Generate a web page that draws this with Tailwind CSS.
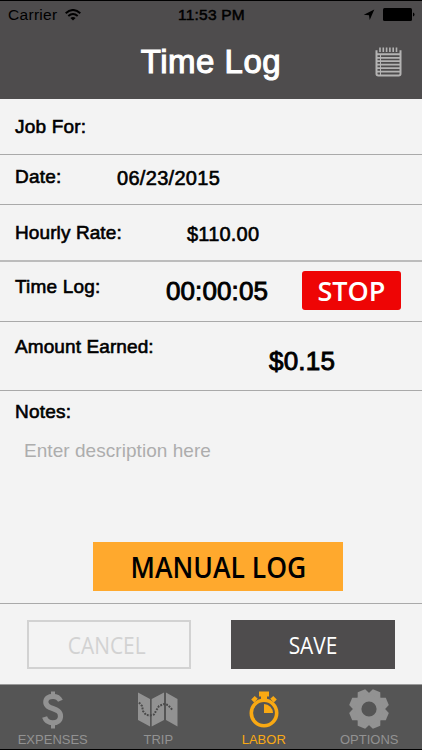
<!DOCTYPE html>
<html lang="en">
<head>
    <meta charset="UTF-8">
    <meta name="viewport" content="width=device-width, initial-scale=1.0">
    <title>Time Log</title>
    <script src="https://cdn.jsdelivr.net/npm/@tailwindcss/browser@4"></script>
</head>
<body class="w-[422px] h-[750px] overflow-hidden flex flex-col bg-[#f3f3f3] text-black font-['Liberation_Sans',sans-serif]">
    <header class="h-[99px] shrink-0 bg-[#4e4c4d] border-t border-black">
        <div class="h-[27px] grid grid-cols-3 items-center pl-2 pr-[7px] text-[15.5px]">
            <div class="flex items-center gap-2 tracking-[0.3px]">
                <span>Carrier</span>
                <svg class="w-4 h-3" viewBox="0 0 16 12" fill="none" stroke="black" stroke-width="2">
                    <path d="M.7 4.2Q8-2.2 15.3 4.2M3.3 7Q8 3 12.7 7"/>
                    <path d="M5.4 9Q8 7 10.6 9L8 11.6Z" fill="black" stroke="none"/>
                </svg>
            </div>
            <span class="text-center tracking-[0.2px] [-webkit-text-stroke:0.5px_black] whitespace-nowrap">11:53 PM</span>
            <div class="flex items-center justify-end gap-2">
                <svg class="w-3 h-3" viewBox="0 0 12 12"><path d="M11.3.5L6.7 11L6 6.3L.8 5.8Z"/></svg>
                <svg class="w-8 h-[13px]" viewBox="0 0 32 13"><rect x="0" y="0" width="29" height="13" rx="1.5"/><path d="M30 4.5Q31.5 5 31.5 6.5Q31.5 8 30 8.5Z"/></svg>
            </div>
        </div>
        <div class="h-[71px] grid grid-cols-[1fr_142px_1fr] items-center">
            <span></span>
            <h1 class="text-[33px] leading-[38px] -mt-[3px] text-white text-center tracking-[0.5px] whitespace-nowrap [-webkit-text-stroke:1.1px_white]">Time Log</h1>
            <svg class="w-[27px] h-[30px] justify-self-end mr-5 -mt-1" viewBox="0 0 27 30" fill="none" stroke="#b4b3b3">
                <path d="M5 .5V5M8.3 .5V5M11.6 .5V5M14.9 .5V5M18.2 .5V5M21.5 .5V5" stroke-width="1.6"/>
                <path d="M1.5 3.2V26.8Q1.5 28.5 3.2 28.5H23.8Q25.5 28.5 25.5 26.8V3.2M1 7.2H26" stroke-width="2"/>
                <path d="M2 10.8H25M2 14.2H25M2 17.7H25M2 21.2H25M2 24.7H25" stroke-width="1.7"/>
                <path d="M5.5 8V28" stroke-width="1"/>
            </svg>
        </div>
    </header>

    <main class="flex flex-col text-[19px] leading-[22px] tracking-[0.2px] [-webkit-text-stroke:0.6px_black]">
        <div class="h-[56px] border-b border-[#a9a9a9] pl-[15px] pt-[17px]">Job For:</div>
        <div class="h-[50px] border-b border-[#a9a9a9] pl-[15px] pt-[11px] flex">
            <span class="w-[102px]">Date:</span>
            <span class="text-[20px] pt-px tracking-[0.3px]">06/23/2015</span>
        </div>
        <div class="h-[57px] border-b-2 border-[#bcbcbc] pl-[15px] pt-[17px] flex">
            <span class="w-[172px] tracking-[0.1px]">Hourly Rate:</span>
            <span class="text-[20px] pt-px">$110.00</span>
        </div>
        <div class="h-[60px] border-b border-[#a9a9a9] pl-[15px] pt-[9px] flex items-start">
            <span class="w-[151px] pt-[5px]">Time Log:</span>
            <span class="w-[136px] text-[26px] leading-[30px] pt-[5px] tracking-[0.1px] [-webkit-text-stroke:0.9px_black]">00:00:05</span>
            <button class="w-[99px] h-[39px] rounded-[3px] bg-[#ee0505] text-white text-[27px] leading-[37px] tracking-normal font-semibold font-['Open_Sans',sans-serif] [-webkit-text-stroke:0px]"><span class="inline-block -mt-px">STOP</span></button>
        </div>
        <div class="h-[69px] border-b border-[#a9a9a9] pl-[15px] pt-[14px] flex items-start">
            <span class="w-[254px] tracking-[0.1px]">Amount Earned:</span>
            <span class="text-[26px] leading-[30px] pt-[10px] [-webkit-text-stroke:0.9px_black]">$0.15</span>
        </div>
        <div class="h-[213px] border-b border-[#a9a9a9] pt-[10px] flex flex-col">
            <span class="pl-[15px]">Notes:</span>
            <p class="pl-6 pt-[17px] text-[#adadad] tracking-[0.05px] [-webkit-text-stroke:0px]">Enter description here</p>
            <button class="w-[250px] h-[49px] mt-[80px] ml-[93px] shrink-0 bg-[#ffa92d] text-[28.5px] leading-[50px] tracking-normal font-semibold font-['Open_Sans',sans-serif] [-webkit-text-stroke:0px]"><span class="inline-block scale-x-[0.93] whitespace-nowrap">MANUAL LOG</span></button>
        </div>
        <div class="h-[80px] pt-4 pl-[27px] flex gap-10 text-[24px] font-['Open_Sans',sans-serif] tracking-normal [-webkit-text-stroke:0px]">
            <button class="w-[164px] h-[49px] pr-[5px] border-2 border-[#d2d2d2] text-[#d2d2d2]"><span class="inline-block scale-x-[0.87]">CANCEL</span></button>
            <button class="w-[164px] h-[49px] bg-[#4e4c4d] text-white"><span class="inline-block scale-x-[0.87]">SAVE</span></button>
        </div>
    </main>

    <nav class="h-[66px] shrink-0 grid grid-cols-4 bg-[#555] border-t border-t-[#999] border-b border-b-black text-[#929292] text-[13px] leading-4 text-center">
        <a class="flex flex-col items-center pt-[6px]">
            <svg class="w-[22px] h-[38px]" viewBox="0 0 22 38" fill="none" stroke="#929292">
                <path d="M18.4 9.8C17 6.6 14.2 5.3 11 5.3C6.8 5.3 3.8 7.4 3.8 11C3.8 19.4 18.5 15.7 18.5 25.2C18.5 29.5 15 31.8 10.8 31.8C6.9 31.8 3.8 29.7 2.6 26" stroke-width="5.2"/>
                <path d="M11 .5V6M11 31V37.5" stroke-width="4"/>
            </svg>
            <span class="mt-[3px]">EXPENSES</span>
        </a>
        <a class="flex flex-col items-center pt-[6px]">
            <svg class="w-10 h-[38px]" viewBox="0 0 40 38">
                <path d="M0 1.5L12 8V35.5L0 29ZM13.7 8L26 1.5V29L13.7 35.5ZM28 1.5L39.5 8V35.5L28 29Z" fill="#929292"/>
                <path d="M1 11.5L4 15L5 20L8 24L12 24.5L16 23.5L18.5 19L21 15L26 13L30 14L34.5 19" fill="none" stroke="#4a4a4a" stroke-width="2" stroke-dasharray="1.9 1.2"/>
            </svg>
            <span class="mt-[3px]">TRIP</span>
        </a>
        <a class="flex flex-col items-center pt-[6px] text-[#f9a913]">
            <svg class="w-[30px] h-[38px]" viewBox="0 0 30 38" fill="#f9a913">
                <path d="M10 .5H20V5.5H18V9H12V5.5H10ZM2.2 8.5L5.7 5L8.8 7.8L5.2 11.5ZM27.8 8.5L24.3 5L21.2 7.8L24.8 11.5Z"/>
                <circle cx="15" cy="22" r="12.7" fill="none" stroke="#f9a913" stroke-width="3.6"/>
                <path d="M15 13A9 9 0 0 1 24 22H15Z"/>
            </svg>
            <span class="mt-[3px]">LABOR</span>
        </a>
        <a class="flex flex-col items-center pt-[4px]">
            <svg class="w-10 h-10" viewBox="-20 -20 40 40">
                <circle r="11.8" fill="none" stroke="#929292" stroke-width="8.4"/>
                <g fill="#929292">
                    <path id="tooth" d="M-6.5 -14L-4 -19.8H4L6.5 -14Z" transform="rotate(22.5)"/>
                    <use href="#tooth" transform="rotate(45)"/>
                    <use href="#tooth" transform="rotate(90)"/>
                    <use href="#tooth" transform="rotate(135)"/>
                    <use href="#tooth" transform="rotate(180)"/>
                    <use href="#tooth" transform="rotate(225)"/>
                    <use href="#tooth" transform="rotate(270)"/>
                    <use href="#tooth" transform="rotate(315)"/>
                </g>
            </svg>
            <span class="mt-[3px]">OPTIONS</span>
        </a>
    </nav>
</body>
</html>
